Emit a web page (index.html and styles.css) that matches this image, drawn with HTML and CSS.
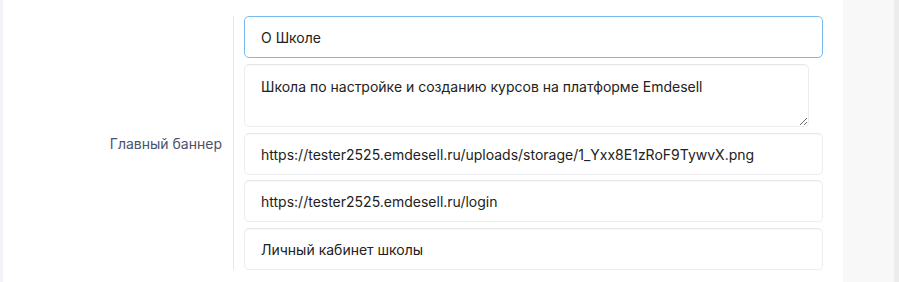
FILE: index.html
```html
<!DOCTYPE html>
<html lang="ru">
<head>
  <meta charset="UTF-8">
  <meta name="viewport" content="width=device-width, initial-scale=1.0">
  <title>Главный баннер</title>
  <link rel="stylesheet" href="styles.css">
</head>
<body>
  <div id="page">
    <div class="edge"></div>
    <div id="panel">
      <div class="form-row">
        <label class="row-label">Главный баннер</label>
        <div class="row-fields">
          <input class="field focused" type="text" value="О Школе">
          <textarea class="field area">Школа по настройке и созданию курсов на платформе Emdesell</textarea>
          <input class="field" type="text" value="https://tester2525.emdesell.ru/uploads/storage/1_Yxx8E1zRoF9TywvX.png">
          <input class="field" type="text" value="https://tester2525.emdesell.ru/login">
          <input class="field" type="text" value="Личный кабинет школы">
        </div>
      </div>
    </div>
    <div id="side"></div>
    <div class="scroll"></div>
  </div>
</body>
</html>
```

FILE: styles.css
```css
html, body, div {
  margin: 0;
  padding: 0;
}

body {
  background-color: #fff;
  color: #222;
  font-family: Inter, "Noto Sans", sans-serif;
  font-size: 14px;
}

#page {
  display: flex;
  height: 282px;
}

.edge {
  width: 3px;
  background-color: #f3f3f7;
}

#panel {
  width: 840px;
  background-color: #fff;
  padding-top: 16px;
}

#side {
  width: 51px;
  background-color: #f8f8f8;
}

.scroll {
  width: 5px;
  background-color: #ececec;
}

.form-row {
  display: flex;
}

.row-label {
  width: 219px;
  padding-right: 11px;
  border-right: 1px solid #e6e6e8;
  display: flex;
  align-items: center;
  justify-content: flex-end;
  font-size: 14px;
  color: #4a5270;
}

.row-fields {
  display: flex;
  flex-direction: column;
  gap: 6px;
  padding-left: 10px;
}

.field {
  box-sizing: border-box;
  width: 579px;
  height: 42px;
  margin: 0;
  padding: 0 16px;
  border: 1px solid #ededf0;
  border-top-color: #e8e8ec;
  box-shadow: inset 0 1px 1px rgba(0, 0, 0, 0.03);
  border-radius: 5px;
  background-color: #fff;
  font-family: Inter, "Noto Sans", sans-serif;
  font-size: 14px;
  color: #222;
  outline: none;
}

.field.focused {
  border-color: #78baf0;
  box-shadow: none;
}

.field.area {
  width: 565px;
  height: 63px;
  padding-top: 12px;
  line-height: 20px;
  resize: vertical;
  display: block;
}

.field.area + .field {
  margin-bottom: -1px;
}
```
